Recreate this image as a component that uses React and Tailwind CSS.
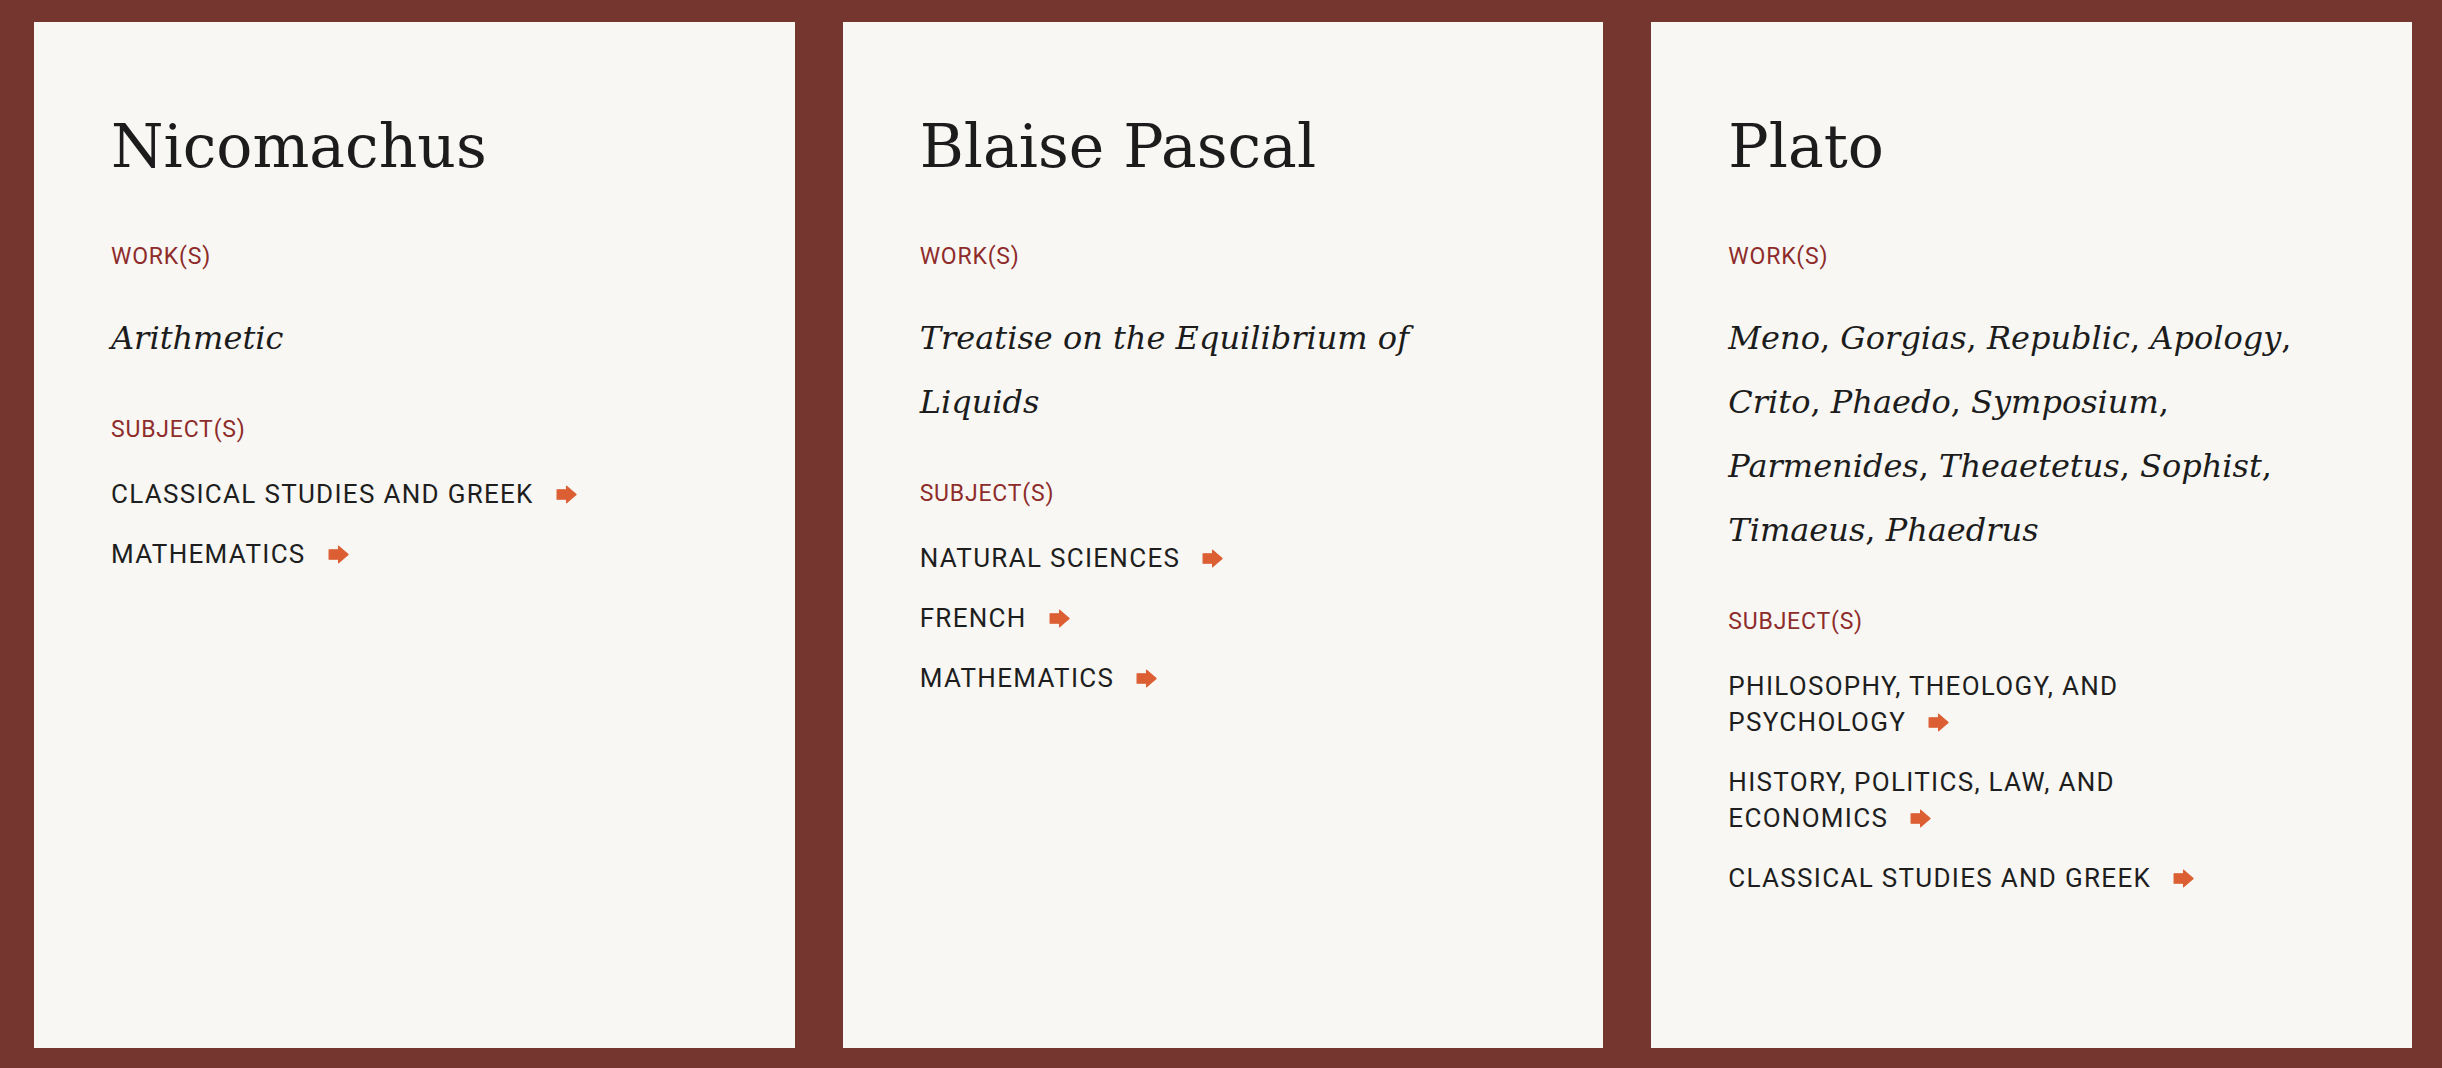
import React from "react";

const cards = [
  {
    name: "Nicomachus",
    works: ["Arithmetic"],
    subjects: ["Classical Studies and Greek", "Mathematics"],
  },
  {
    name: "Blaise Pascal",
    works: ["Treatise on the Equilibrium of Liquids"],
    subjects: ["Natural Sciences", "French", "Mathematics"],
  },
  {
    name: "Plato",
    works: [
      "Meno",
      "Gorgias",
      "Republic",
      "Apology",
      "Crito",
      "Phaedo",
      "Symposium",
      "Parmenides",
      "Theaetetus",
      "Sophist",
      "Timaeus",
      "Phaedrus",
    ],
    subjects: [
      "Philosophy, Theology, and Psychology",
      "History, Politics, Law, and Economics",
      "Classical Studies and Greek",
    ],
  },
];

function Arrow() {
  return (
    <svg
      width="21"
      height="19"
      viewBox="0 0 20 18"
      className="inline-block ml-[22px] align-[-1px]"
      aria-hidden="true"
    >
      <path
        d="M1 4.5 H10 V1 L19.2 9 L10 17 V13.5 H1 Z"
        fill="#dc5f34"
        stroke="#dc5f34"
        strokeWidth="1"
        strokeLinejoin="round"
      />
    </svg>
  );
}

function Card({ card }) {
  return (
    <div className="bg-[#f8f7f3] pl-[77px] pr-[40px] pt-[88px]">
      <h2 className="font-['DejaVu_Serif',serif] text-[60px] leading-[72px] text-[#1c1c1c] font-normal">
        {card.name}
      </h2>
      <div className="mt-[59px] font-['Roboto',sans-serif] text-[23px] leading-[32px] tracking-[0.8px] uppercase text-[#8e2c2b]">
        Work(s)
      </div>
      <p className="mt-[33px] max-w-[590px] font-['DejaVu_Serif',serif] text-[32px] leading-[64px] text-[#1c1c1c]">
        {card.works.map((w, i) => (
          <React.Fragment key={w}>
            <i>{w}</i>
            {i < card.works.length - 1 ? ", " : ""}
          </React.Fragment>
        ))}
      </p>
      <div className="mt-[44px] font-['Roboto',sans-serif] text-[23px] leading-[32px] tracking-[0.8px] uppercase text-[#8e2c2b]">
        Subject(s)
      </div>
      <ul className="mt-[30px] max-w-[540px] flex flex-col gap-[24px]">
        {card.subjects.map((s) => (
          <li
            key={s}
            className="font-['Roboto',sans-serif] text-[26px] leading-[36px] tracking-[1.3px] uppercase text-[#1e1e1e]"
          >
            {s}
            <Arrow />
          </li>
        ))}
      </ul>
    </div>
  );
}

export default function App() {
  return (
    <div className="w-full h-[1068px] bg-[#74362f] pl-[34px] pr-[30px] pt-[22px] pb-[20px] grid grid-cols-3 gap-12">
      {cards.map((c) => (
        <Card key={c.name} card={c} />
      ))}
    </div>
  );
}
